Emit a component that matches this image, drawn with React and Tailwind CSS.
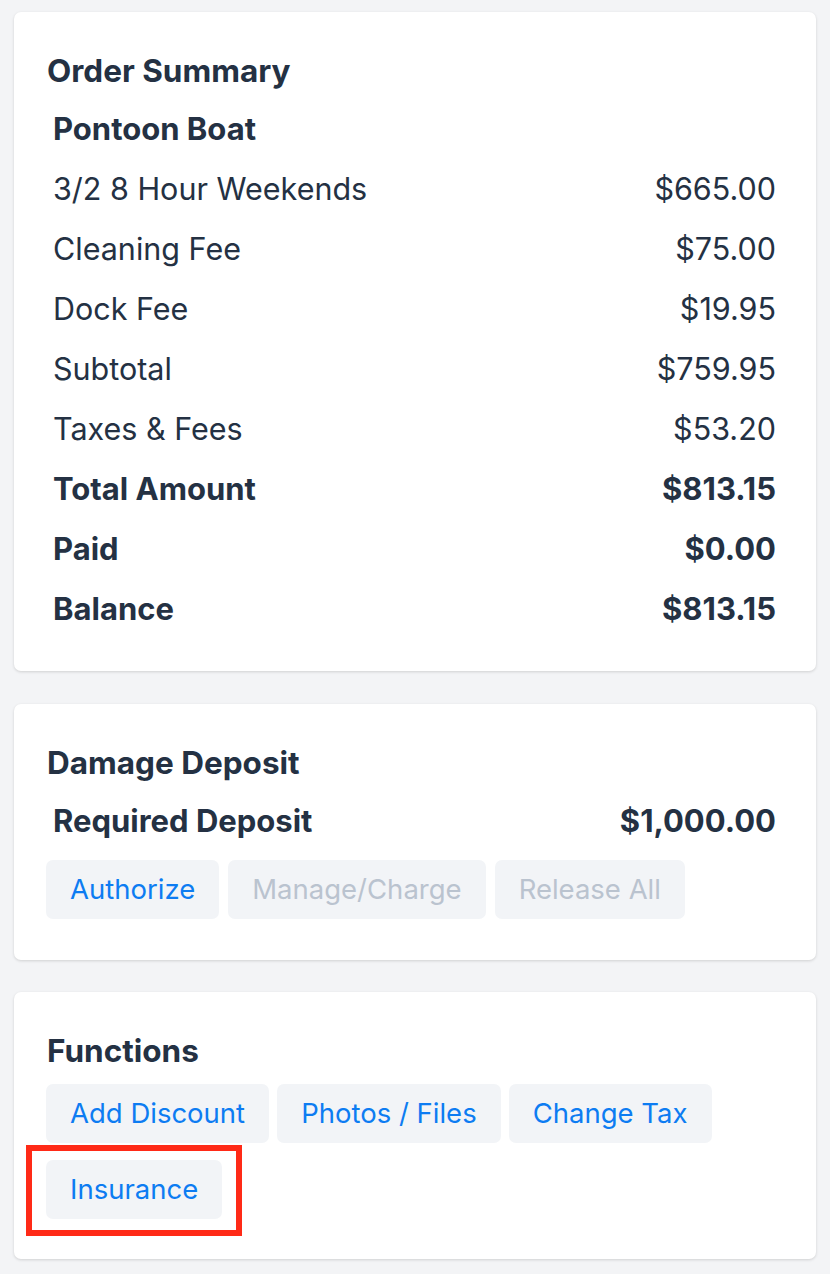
import React from "react";

const rows = [
  { label: "3/2 8 Hour Weekends", value: "$665.00" },
  { label: "Cleaning Fee", value: "$75.00" },
  { label: "Dock Fee", value: "$19.95" },
  { label: "Subtotal", value: "$759.95" },
  { label: "Taxes & Fees", value: "$53.20" },
  { label: "Total Amount", value: "$813.15", bold: true },
  { label: "Paid", value: "$0.00", bold: true },
  { label: "Balance", value: "$813.15", bold: true },
];

function Row({ label, value, bold }) {
  return (
    <div
      className={
        "flex h-[60px] items-center justify-between pl-[39px] pr-[40px] " +
        (bold ? "text-[31px] font-bold" : "text-[30.5px] font-normal")
      }
    >
      <span>{label}</span>
      <span>{value}</span>
    </div>
  );
}

function Btn({ children, disabled }) {
  return (
    <button
      className={
        "h-[59px] rounded-[7px] bg-[#f2f4f7] px-[24px] text-[27.5px] " +
        (disabled ? "text-[#bac3cf]" : "text-[#0d7cf2]")
      }
    >
      {children}
    </button>
  );
}

function Title({ children }) {
  return (
    <div className="flex h-[56px] items-center pl-[33px] text-[31.5px] font-bold">
      {children}
    </div>
  );
}

export default function App() {
  return (
    <div
      className="min-h-[1274px] bg-[#f3f4f6] pt-[12px] pb-[15px] text-[#243143]"
      style={{ fontFamily: "Inter, 'Noto Sans', sans-serif" }}
    >
      <div className="mx-[14px] rounded-[7px] bg-white pt-[31px] pb-[32px] shadow-[0_1px_3px_rgba(0,0,0,0.15)]">
        <Title>Order Summary</Title>
        <Row label="Pontoon Boat" value="" bold />
        {rows.map((r) => (
          <Row key={r.label} {...r} />
        ))}
      </div>

      <div className="mx-[14px] mt-[33px] rounded-[7px] bg-white pt-[31px] pb-[41px] shadow-[0_1px_3px_rgba(0,0,0,0.15)]">
        <Title>Damage Deposit</Title>
        <Row label="Required Deposit" value="$1,000.00" bold />
        <div className="mt-[9px] flex gap-[9px] pl-[32px]">
          <Btn>Authorize</Btn>
          <Btn disabled>Manage/Charge</Btn>
          <Btn disabled>Release All</Btn>
        </div>
      </div>

      <div className="mx-[14px] mt-[32px] rounded-[7px] bg-white pt-[31px] pb-[40px] shadow-[0_1px_3px_rgba(0,0,0,0.15)]">
        <Title>Functions</Title>
        <div className="mt-[5px] flex flex-wrap gap-x-[8px] gap-y-[17px] pl-[32px]">
          <Btn>Add Discount</Btn>
          <Btn>Photos / Files</Btn>
          <Btn>Change Tax</Btn>
          <div className="relative">
            <Btn>Insurance</Btn>
            <span className="pointer-events-none absolute -left-[20px] -right-[20px] -top-[15px] -bottom-[17px] border-[6px] border-[#ff2a17]" />
          </div>
        </div>
      </div>
    </div>
  );
}
